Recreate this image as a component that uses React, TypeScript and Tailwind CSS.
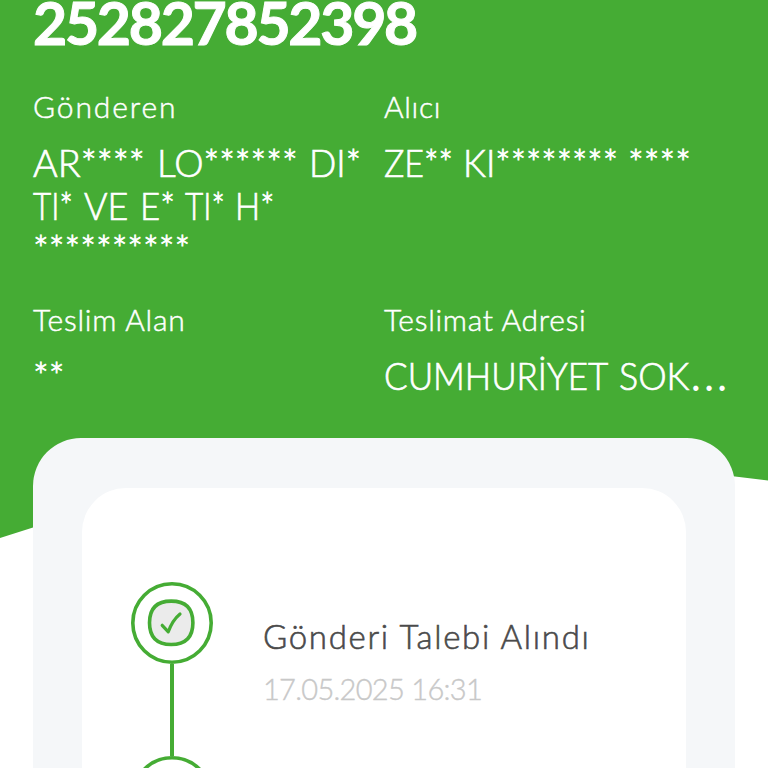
import React from "react";

function Label({ children, spacing }: { children: React.ReactNode; spacing: string }) {
  return (
    <div className={`h-9 text-[30px] leading-[34px] font-light whitespace-nowrap [-webkit-text-stroke:0.5px] ${spacing}`}>
      {children}
    </div>
  );
}

/* One word of a value: letters, then its masked part. fit sets the slot's width and condensing. */
function Word({ children, mask = "", fit = "" }: { children?: string; mask?: string; fit?: string }) {
  return (
    <span className={`inline-block shrink-0 origin-left ${fit}`}>
      {children}
      <span className="[-webkit-text-stroke:0.8px]">{mask}</span>
    </span>
  );
}

function Value({ children }: { children: React.ReactNode }) {
  return (
    <div className="text-[37px] leading-[43px] font-light whitespace-nowrap [-webkit-text-stroke:0.7px]">
      {children}
    </div>
  );
}

function Step({ title, date }: { title: string; date: string }) {
  return (
    <div className="flex">
      <div className="flex w-[82px] shrink-0 flex-col items-center">
        <svg width="82" height="82" viewBox="0 0 82 82" fill="none" stroke="#45ac34" strokeWidth="3.6">
          <circle cx="41" cy="41" r="39.2" />
          <path
            d="M40.2 19.1C54.5 19.1 61.9 26.5 61.9 40.8S54.5 62.5 40.2 62.5 18.5 55.1 18.5 40.8 25.9 19.1 40.2 19.1Z"
            fill="#ebebeb"
          />
          <path d="M31.2 43.3L37.3 49.8C39.5 43.5 43 36.8 49 31.9" strokeWidth="3.2" strokeLinecap="round" strokeLinejoin="round" />
        </svg>
        <div className="h-[92px] w-1 bg-[#45ac34]" />
      </div>
      <div className="ml-[50px] flex flex-col pt-[34px] whitespace-nowrap">
        <div className="h-10 text-[33px] leading-10 font-light tracking-[1.7px] text-[#4a4a4a] [-webkit-text-stroke:0.6px]">
          {title}
        </div>
        <div className="mt-[15px] h-9 text-[29px] leading-9 font-light tracking-[-0.7px] text-[#c8c8c8] [-webkit-text-stroke:0.4px]">
          {date}
        </div>
      </div>
    </div>
  );
}

export default function App() {
  return (
    <main className="relative isolate flex h-[768px] w-[768px] flex-col overflow-hidden bg-white font-['Lato','Open_Sans',sans-serif] text-white">
      <svg className="absolute inset-0 -z-10" width="768" height="768" viewBox="0 0 768 768">
        <path d="M0 0H768V480.5L735 476.5C510 454 220 462 33 527.5L0 538Z" fill="#45ac34" />
      </svg>
      <header className="h-[438px] shrink-0 pl-[33px]">
        <div className="h-[60px] text-[59px] leading-[46px] font-bold tracking-[-2.3px] [-webkit-text-stroke:1px]">
          252827852398
        </div>
        <div className="mt-[29px] grid grid-cols-[351px_351px]">
          <Label spacing="tracking-[1.9px]">Gönderen</Label>
          <Label spacing="tracking-[0.7px]">Alıcı</Label>
        </div>
        <div className="mt-[16px] grid grid-cols-[351px_351px]">
          <Value>
            <div className="flex">
              <Word mask="****" fit="w-[124px] scale-x-[1.02]">AR</Word>
              <Word mask="******" fit="w-[152px]">LO</Word>
              <Word mask="*" fit="scale-x-[0.97]">DI</Word>
            </div>
            <div className="flex">
              <Word mask="*" fit="w-[51px] scale-x-[0.85]">TI</Word>
              <Word fit="w-[56px] scale-x-[0.97]">VE</Word>
              <Word mask="*" fit="w-[45px] scale-x-[0.94]">E</Word>
              <Word mask="*" fit="w-[50px] scale-x-[0.85]">TI</Word>
              <Word mask="*" fit="scale-x-[0.9]">H</Word>
            </div>
            <Word mask="**********" />
          </Value>
          <Value>
            <div className="flex">
              <Word mask="**" fit="w-[79px] scale-x-[0.92]">ZE</Word>
              <Word mask="********" fit="w-[165px] scale-x-[0.975]">KI</Word>
              <Word mask="****" fit="w-[62px]" />
            </div>
          </Value>
        </div>
        <div className="mt-[32px] grid grid-cols-[351px_351px]">
          <Label spacing="tracking-[0.8px]">Teslim Alan</Label>
          <Label spacing="tracking-[0.7px]">Teslimat Adresi</Label>
        </div>
        <div className="mt-[16px] grid grid-cols-[351px_351px]">
          <Value>
            <Word mask="**" />
          </Value>
          <Value>
            <div className="flex">
              <Word fit="w-[235px] scale-x-[0.945]">CUMHURİYET</Word>
              <Word fit="scale-x-[0.97]">SOK</Word>
              <Word fit="tracking-[4.5px] [-webkit-text-stroke:1.8px]">...</Word>
            </div>
          </Value>
        </div>
      </header>
      <section className="mx-[33px] h-[430px] shrink-0 rounded-t-[48px] bg-[#f5f7f9] px-[49px] pt-[50px]">
        <div className="h-[480px] rounded-t-[44px] bg-white pt-[94px] pl-[49px]">
          <Step title="Gönderi Talebi Alındı" date="17.05.2025 16:31" />
          <Step title="" date="" />
        </div>
      </section>
    </main>
  );
}
